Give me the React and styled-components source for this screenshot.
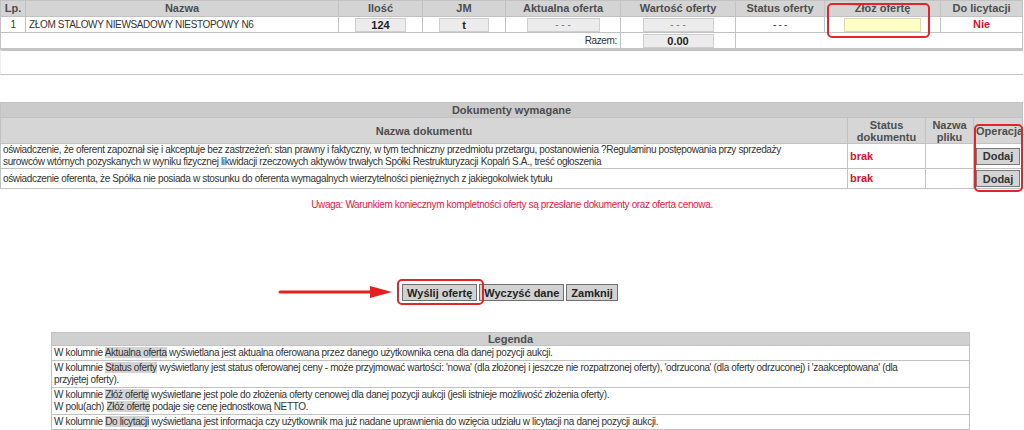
import React from "react"
import styled, { createGlobalStyle } from "styled-components"

const GlobalStyle = createGlobalStyle`
  body {
    margin: 0;
    background: #fff;
    font-family: "Liberation Sans", Arial, sans-serif;
    font-size: 10px;
    letter-spacing: -0.35px;
    color: #333;
  }
`

const Page = styled.div`
  position: relative;
  width: 1024px;
  height: 430px;
  overflow: hidden;
`

const Grid = styled.table`
  width: 1022px;
  border-collapse: collapse;
  table-layout: fixed;
  td,
  th {
    border: 1px solid #c2c2c2;
    padding: 0 3px;
    height: 15px;
    line-height: 13px;
    overflow: hidden;
    white-space: nowrap;
  }
  th {
    background: #d4d4d4;
    color: #4d4d4d;
    font-size: 11px;
    letter-spacing: 0;
    font-weight: bold;
    text-align: center;
  }
`

const Cell = styled.td`
  text-align: ${p => p.$align || "left"};
`

const ValueBox = styled.div`
  margin: 0 auto;
  width: ${p => p.$w}px;
  height: 12px;
  line-height: 12px;
  background: ${p => (p.$input ? "#ffffc6" : "#ececec")};
  border: 1px solid ${p => (p.$input ? "#d9d9b0" : "#cfcfcf")};
  color: ${p => (p.$muted ? "#777" : "#222")};
  font-size: ${p => (p.$muted ? "10px" : "11px")};
  letter-spacing: 0;
  font-weight: ${p => (p.$muted ? "normal" : "bold")};
  text-align: center;
`

const Red = styled.span`
  color: #e0102c;
  font-size: 11px;
  letter-spacing: 0;
  font-weight: bold;
`

const Spacer = styled.div`
  width: 1022px;
  height: 23px;
  border-top: 2px solid #c4c4c4;
  border-bottom: 1px solid #c4c4c4;
  border-left: 1px solid #eee;
  margin-bottom: 27px;
`

const DocGrid = styled(Grid)`
  td,
  th {
    padding: 0 2px;
    overflow: visible;
  }
  tr.title th {
    background: #cbcbcb;
    height: 14px;
  }
  tr.head th {
    height: 25px;
    line-height: 12px;
    background: #d6d6d6;
    white-space: normal;
  }
`

const DocRow = styled.tr`
  td {
    height: ${p => p.$h}px;
    line-height: 12px;
    vertical-align: middle;
  }
`

const SmallButton = styled.button`
  display: block;
  margin-left: auto;
  width: 44px;
  height: 17px;
  padding: 0;
  font-family: inherit;
  font-size: 11px;
  font-weight: bold;
  color: #333;
  background: #d4d4d4;
  border: 1px solid #7a7a7a;
`

const Notice = styled.div`
  margin-top: 10px;
  text-align: center;
  color: #e5173f;
  line-height: 12px;
`

const ActionBar = styled.div`
  display: flex;
  justify-content: center;
  margin-top: 73px;
  padding-right: 4px;
`

const ActionGroup = styled.div`
  position: relative;
  display: flex;
  gap: 2px;
`

const ActionButton = styled.button`
  height: 17px;
  padding: 0 4px;
  font-family: inherit;
  font-size: 11px;
  letter-spacing: 0;
  font-weight: bold;
  color: #222;
  background: #d2d2d2;
  border: 1px solid #6f6f6f;
`

const Arrow = styled.svg`
  position: absolute;
  left: -124px;
  top: 0;
`

const Mark = styled.div`
  position: absolute;
  left: ${p => p.$x}px;
  top: ${p => p.$y}px;
  width: ${p => p.$w}px;
  height: ${p => p.$h}px;
  border: 2px solid #e0262a;
  border-radius: 5px;
  box-sizing: border-box;
  pointer-events: none;
`

const Legend = styled.table`
  margin: 31px 0 0 51px;
  width: 919px;
  border-collapse: collapse;
  td,
  th {
    border: 1px solid #c2c2c2;
    padding: 0 2px;
    line-height: 12px;
    white-space: nowrap;
  }
  th {
    height: 11px;
    background: #d0d0d0;
    color: #4d4d4d;
    font-size: 11px;
    letter-spacing: 0;
  }
  td {
    color: #333;
    padding-top: 1px;
    padding-bottom: 1px;
  }
`

const Hl = styled.span`
  background: #d3d3d3;
`

const columns = [25, 313, 84, 83, 115, 115, 89, 116, 82]

export default function App() {
  return (
    <Page>
      <GlobalStyle />
      <Grid>
        <colgroup>
          {columns.map((w, i) => (
            <col key={i} style={{ width: w }} />
          ))}
        </colgroup>
        <thead>
          <tr>
            <th>Lp.</th>
            <th>Nazwa</th>
            <th>Ilość</th>
            <th>JM</th>
            <th>Aktualna oferta</th>
            <th>Wartość oferty</th>
            <th>Status oferty</th>
            <th>Złóż ofertę</th>
            <th>Do licytacji</th>
          </tr>
        </thead>
        <tbody>
          <tr>
            <Cell $align="center">1</Cell>
            <Cell>ZŁOM STALOWY NIEWSADOWY NIESTOPOWY N6</Cell>
            <Cell><ValueBox $w={49}>124</ValueBox></Cell>
            <Cell><ValueBox $w={48}>t</ValueBox></Cell>
            <Cell><ValueBox $w={71} $muted>- - -</ValueBox></Cell>
            <Cell><ValueBox $w={69} $muted>- - -</ValueBox></Cell>
            <Cell $align="center">- - -</Cell>
            <Cell><ValueBox $w={75} $input /></Cell>
            <Cell $align="center"><Red>Nie</Red></Cell>
          </tr>
          <tr>
            <Cell colSpan={5} $align="right">Razem:</Cell>
            <Cell><ValueBox $w={69}>0.00</ValueBox></Cell>
            <Cell colSpan={3} />
          </tr>
        </tbody>
      </Grid>
      <Spacer />
      <DocGrid>
        <colgroup>
          <col style={{ width: 847 }} />
          <col style={{ width: 78 }} />
          <col style={{ width: 48 }} />
          <col style={{ width: 49 }} />
        </colgroup>
        <thead>
          <tr className="title">
            <th colSpan={4}>Dokumenty wymagane</th>
          </tr>
          <tr className="head">
            <th>Nazwa dokumentu</th>
            <th>Status dokumentu</th>
            <th>Nazwa pliku</th>
            <th>Operacja</th>
          </tr>
        </thead>
        <tbody>
          <DocRow $h={24}>
            <td>
              oświadczenie, że oferent zapoznał się i akceptuje bez zastrzeżeń: stan prawny i faktyczny, w tym techniczny
              przedmiotu przetargu, postanowienia ?Regulaminu postępowania przy sprzedaży
              <br />
              surowców wtórnych pozyskanych w wyniku fizycznej likwidacji rzeczowych aktywów trwałych Spółki
              Restrukturyzacji Kopalń S.A., treść ogłoszenia
            </td>
            <td><Red>brak</Red></td>
            <td />
            <td><SmallButton>Dodaj</SmallButton></td>
          </DocRow>
          <DocRow $h={19}>
            <td>
              oświadczenie oferenta, że Spółka nie posiada w stosunku do oferenta wymagalnych wierzytelności pieniężnych z
              jakiegokolwiek tytułu
            </td>
            <td><Red>brak</Red></td>
            <td />
            <td><SmallButton>Dodaj</SmallButton></td>
          </DocRow>
        </tbody>
      </DocGrid>
      <Notice>Uwaga: Warunkiem koniecznym kompletności oferty są przesłane dokumenty oraz oferta cenowa.</Notice>
      <ActionBar>
        <ActionGroup>
          <Arrow width="116" height="16" viewBox="0 0 116 16">
            <line x1="2" y1="8" x2="96" y2="8" stroke="#e3201f" strokeWidth="3" strokeLinecap="round" />
            <polygon points="92,2 114,8 92,14" fill="#e3201f" />
          </Arrow>
          <ActionButton>Wyślij ofertę</ActionButton>
          <ActionButton>Wyczyść dane</ActionButton>
          <ActionButton>Zamknij</ActionButton>
          <Mark $x={-5} $y={-5} $w={87} $h={26} />
        </ActionGroup>
      </ActionBar>
      <Legend>
        <thead>
          <tr>
            <th>Legenda</th>
          </tr>
        </thead>
        <tbody>
          <tr>
            <td>W kolumnie <Hl>Aktualna oferta</Hl> wyświetlana jest aktualna oferowana przez danego użytkownika cena dla danej pozycji aukcji.</td>
          </tr>
          <tr>
            <td>
              W kolumnie <Hl>Status oferty</Hl> wyświetlany jest status oferowanej ceny - może przyjmować wartości: 'nowa' (dla
              złożonej i jeszcze nie rozpatrzonej oferty), 'odrzucona' (dla oferty odrzuconej) i 'zaakceptowana' (dla
              <br />
              przyjętej oferty).
            </td>
          </tr>
          <tr>
            <td>
              W kolumnie <Hl>Złóż ofertę</Hl> wyświetlane jest pole do złożenia oferty cenowej dla danej pozycji aukcji (jesli
              istnieje możliwość złożenia oferty).
              <br />
              W polu(ach) <Hl>Złóż ofertę</Hl> podaje się cenę jednostkową NETTO.
            </td>
          </tr>
          <tr>
            <td>W kolumnie <Hl>Do licytacji</Hl> wyświetlana jest informacja czy użytkownik ma już nadane uprawnienia do wzięcia udziału w licytacji na danej pozycji aukcji.</td>
          </tr>
        </tbody>
      </Legend>
      <Mark $x={827} $y={3} $w={103} $h={35} />
      <Mark $x={974} $y={124} $w={49} $h={68} />
    </Page>
  )
}
